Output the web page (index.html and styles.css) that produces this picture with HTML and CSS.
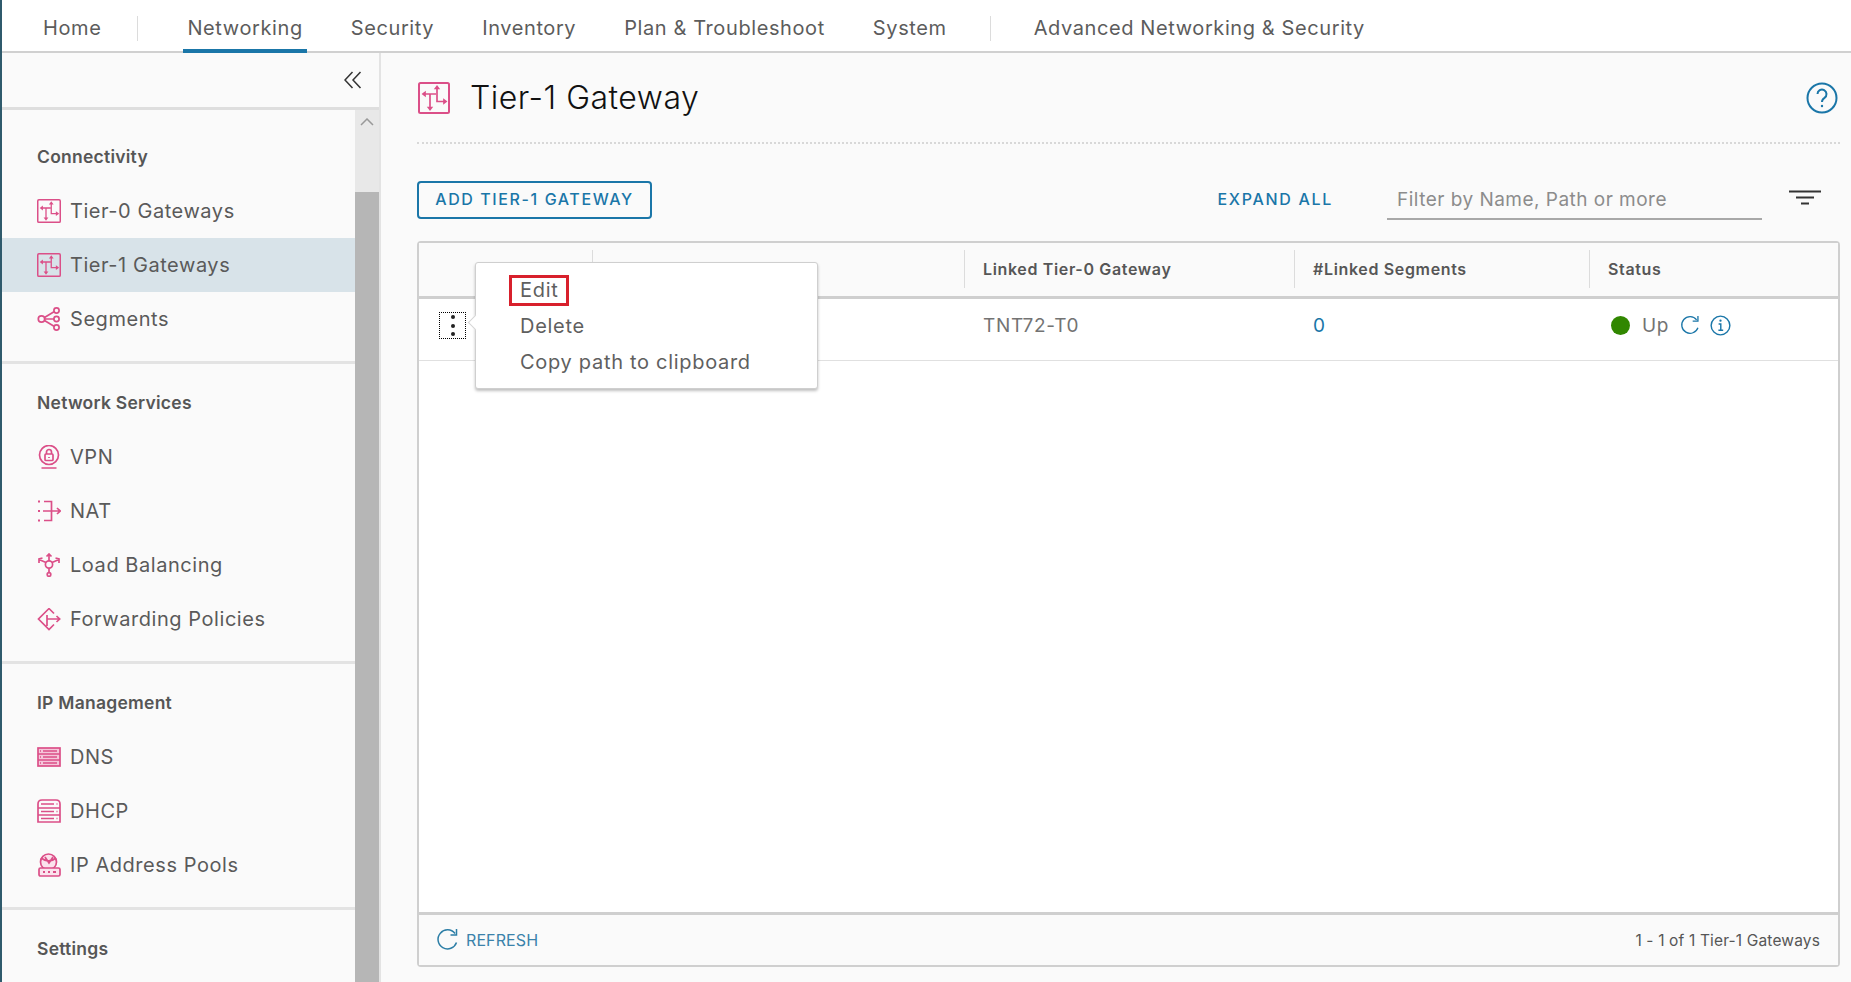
FILE: index.html
```html
<!DOCTYPE html>
<html lang="en">
<head>
    <meta charset="UTF-8">
    <title>Tier-1 Gateway</title>
    <link rel="stylesheet" href="styles.css">
</head>
<body>

<!-- Iconos -->
<svg class="sprite" width="0" height="0">
    <symbol id="i-gateway" viewBox="0 0 32 32">
        <rect x="1" y="1" width="30" height="30" rx="1.5" stroke-width="2"/>
        <path stroke-width="1.7" d="M5 12H18M12 12V27M19 5V19.5H27.5M5 12l2-1.5v3zM12 27.5l-1.5-2h3zM19 4.5l-1.5 2h3zM28 19.5l-2-1.5v3z"/>
    </symbol>
    <symbol id="i-segments" viewBox="0 0 24 24">
        <circle cx="4.5" cy="12" r="3.2"/><circle cx="19.5" cy="3.5" r="2.6"/><circle cx="19.5" cy="12" r="2.6"/><circle cx="19.5" cy="20.5" r="2.6"/>
        <path d="M7.5 10.5L17 4.8M7.8 12H17M7.5 13.5L17 19.2"/>
    </symbol>
    <symbol id="i-vpn" viewBox="0 0 24 24">
        <circle cx="12" cy="10" r="9.5"/>
        <rect x="8" y="9" width="8" height="6.5" rx="1"/>
        <path d="M9.5 9V7a2.5 2.5 0 0 1 5 0v2M4.500 23H19.500M12 12v1"/>
    </symbol>
    <symbol id="i-nat" viewBox="0 0 24 24">
        <path d="M7 2.5H14.5V21.5H7M6 12H23M20 9l3.2 3-3.2 3"/>
        <path d="M1 2.5H3M1 12H3M1 21.5H3" stroke-width="2"/>
    </symbol>
    <symbol id="i-lb" viewBox="0 0 24 24">
        <circle cx="12" cy="11.5" r="3.6"/><circle cx="12" cy="21.5" r="1.8"/>
        <path d="M12 8V1.5M9.5 3.5L12 1l2.5 2.5M12 15V19.7M9 9.5L2 6.5M2 10V6l3.5-1M15 9.5L22 6.5M22 10V6l-3.5-1"/>
    </symbol>
    <symbol id="i-forward" viewBox="0 0 24 24">
        <path d="M12 1.5L1.5 12 12 22.5 17 17.5M17 6.5L12 1.5M10 12H22.5M19.5 9l3.2 3-3.2 3M10 8V19"/>
    </symbol>
    <symbol id="i-dns" viewBox="0 0 24 20">
        <rect x="1" y="1" width="22" height="18" fill="#f5c6da"/>
        <path d="M1 7H23M1 13H23M6 4H20M6 10H20M6 16H20M3 4H4M3 10H4M3 16H4"/>
    </symbol>
    <symbol id="i-dhcp" viewBox="0 0 24 24">
        <path d="M1 23V5q0-4 4-4H19q4 0 4 4V23zM1 9H23M1 16H23M4 5H17M4 12.5H17M4 19.5H17M19.5 5H20.5M19.5 12.5H20.5M19.5 19.5H20.5"/>
    </symbol>
    <symbol id="i-pool" viewBox="0 0 24 24">
        <circle cx="11.5" cy="9" r="8" fill="#fbe3ed"/>
        <path d="M4 5q8 6 15 0M8 4l4 6 4-6"/>
        <rect x="2" y="15" width="21" height="8" rx="1.5" fill="#fbe3ed"/>
        <path d="M6 19H8M11 19H13M16 19H19" stroke-width="1.8"/>
    </symbol>
    <symbol id="i-refresh" viewBox="0 0 24 24">
        <path d="M20.5 14.5A9.5 9.5 0 1 1 19 5.5M20.5 1V7H14.5"/>
    </symbol>
</svg>

<div class="app">
    <header class="top-nav">
        <a class="nav-link nav-home">Home</a>
        <span class="nav-sep sep-a"></span>
        <a class="nav-link active">Networking</a>
        <a class="nav-link">Security</a>
        <a class="nav-link">Inventory</a>
        <a class="nav-link">Plan &amp; Troubleshoot</a>
        <a class="nav-link">System</a>
        <span class="nav-sep sep-b"></span>
        <a class="nav-link">Advanced Networking &amp; Security</a>
    </header>

    <div class="layout">
        <!-- Menu lateral -->
        <aside class="sidebar">
            <div class="collapse-bar">
                <svg class="collapse-icon" viewBox="0 0 18 18"><path d="M8.5 1L1 9l7.5 8M16.5 1L9 9l7.5 8"/></svg>
            </div>
            <div class="side-body">
                <nav class="side-menu">
                    <section class="side-group">
                        <h4>Connectivity</h4>
                        <a class="side-item"><svg class="side-icon"><use href="#i-gateway"/></svg>Tier-0 Gateways</a>
                        <a class="side-item selected"><svg class="side-icon"><use href="#i-gateway"/></svg>Tier-1 Gateways</a>
                        <a class="side-item"><svg class="side-icon"><use href="#i-segments"/></svg>Segments</a>
                    </section>
                    <section class="side-group">
                        <h4>Network Services</h4>
                        <a class="side-item"><svg class="side-icon"><use href="#i-vpn"/></svg>VPN</a>
                        <a class="side-item"><svg class="side-icon"><use href="#i-nat"/></svg>NAT</a>
                        <a class="side-item"><svg class="side-icon"><use href="#i-lb"/></svg>Load Balancing</a>
                        <a class="side-item"><svg class="side-icon"><use href="#i-forward"/></svg>Forwarding Policies</a>
                    </section>
                    <section class="side-group">
                        <h4>IP Management</h4>
                        <a class="side-item"><svg class="side-icon"><use href="#i-dns"/></svg>DNS</a>
                        <a class="side-item"><svg class="side-icon"><use href="#i-dhcp"/></svg>DHCP</a>
                        <a class="side-item"><svg class="side-icon"><use href="#i-pool"/></svg>IP Address Pools</a>
                    </section>
                    <section class="side-group">
                        <h4>Settings</h4>
                    </section>
                </nav>
                <div class="scrollbar">
                    <div class="scroll-track">
                        <svg class="scroll-up" viewBox="0 0 14 8"><path d="M1 7l6-6 6 6"/></svg>
                    </div>
                    <div class="scroll-thumb"></div>
                </div>
            </div>
        </aside>

        <!-- Contenido -->
        <main class="main">
            <div class="page-head">
                <svg class="page-icon"><use href="#i-gateway"/></svg>
                <h1>Tier-1 Gateway</h1>
                <svg class="help-icon" viewBox="0 0 32 32">
                    <circle cx="16" cy="16" r="14.5"/>
                    <path d="M11.5 12a4.5 4.5 0 1 1 7 3.8c-1.7 1-2.5 2-2.5 4.2"/>
                    <circle class="dot" cx="16" cy="24" r="1.2"/>
                </svg>
            </div>

            <div class="toolbar">
                <button class="btn-outline">ADD TIER-1 GATEWAY</button>
                <a class="expand-all">EXPAND ALL</a>
                <div class="filter-input">Filter by Name, Path or more</div>
                <svg class="filter-icon" viewBox="0 0 32 15"><path d="M0 1.5H32M7 7.5H25M12 13.5H20"/></svg>
            </div>

            <div class="grid-box">
                <div class="grid-head">
                    <div class="cell"></div>
                    <div class="cell"></div>
                    <div class="cell">Linked Tier-0 Gateway</div>
                    <div class="cell">#Linked Segments</div>
                    <div class="cell">Status</div>
                </div>
                <div class="grid-body">
                    <div class="grid-row">
                        <div class="cell"><span class="row-menu"><i></i><i></i><i></i></span></div>
                        <div class="cell"></div>
                        <div class="cell">TNT72-T0</div>
                        <div class="cell"><a class="link">0</a></div>
                        <div class="cell status">
                            <span class="status-dot"></span>
                            <span class="status-text">Up</span>
                            <svg class="mini-icon"><use href="#i-refresh"/></svg>
                            <svg class="mini-icon" viewBox="0 0 22 22">
                                <circle cx="11" cy="11" r="9.8"/>
                                <path d="M9 9.5H11.3V16M8.8 16H13.8"/>
                                <circle class="dot" cx="11" cy="6" r="1.2"/>
                            </svg>
                        </div>
                    </div>
                </div>
                <div class="grid-foot">
                    <a class="refresh"><svg class="refresh-icon"><use href="#i-refresh"/></svg>REFRESH</a>
                    <span class="count">1 - 1 of 1 Tier-1 Gateways</span>
                </div>

                <!-- Menu contextual -->
                <div class="popup">
                    <span class="popup-arrow"></span>
                    <a class="popup-item"><span class="marked">Edit</span></a>
                    <a class="popup-item">Delete</a>
                    <a class="popup-item">Copy path to clipboard</a>
                </div>
            </div>
        </main>
    </div>
</div>

</body>
</html>
```

FILE: styles.css
```css
html, body {
    height: 100%;
    margin: 0;
    overflow: hidden;
    background-color: #fafafa;
    font-family: 'Inter', 'Liberation Sans', sans-serif;
    color: #565656;
}

.sprite {
    position: absolute;
}

svg {
    fill: none;
    stroke: currentColor;
    stroke-width: 1.5;
}

a {
    cursor: pointer;
}

.app {
    height: 100%;
    display: flex;
    flex-direction: column;
    border-left: 2px solid #2f5a6c;
}

/* Barra superior */
.top-nav {
    height: 51px;
    flex: none;
    display: flex;
    align-items: stretch;
    padding-left: 41px;
    background-color: #fff;
    border-bottom: 2px solid #d0d0d0;
    font-size: 20px;
    letter-spacing: 0.6px;
}

.nav-link {
    display: flex;
    align-items: center;
    padding: 6px 4px 0;
    margin-right: 40px;
    margin-bottom: -2px;
    border-bottom: 4px solid transparent;
    color: #5c5c5c;
}

.nav-link.active {
    border-bottom-color: #1a76a8;
}

.nav-home {
    margin-right: 0;
    padding: 6px 0 0;
}

.nav-sep {
    width: 1px;
    height: 25px;
    margin-top: 16px;
    background-color: #dcdcdc;
}

.sep-a {
    margin-left: 36px;
    margin-right: 45px;
}

.sep-b {
    margin-left: -1px;
    margin-right: 39px;
}

.layout {
    flex: 1;
    min-height: 0;
    display: flex;
}

/* Menu lateral */
.sidebar {
    width: 379px;
    flex: none;
    box-sizing: border-box;
    display: flex;
    flex-direction: column;
    border-right: 2px solid #e3e3e3;
}

.collapse-bar {
    height: 57px;
    flex: none;
    box-sizing: border-box;
    display: flex;
    align-items: center;
    justify-content: flex-end;
    padding-right: 17px;
    border-bottom: 3px solid #dedede;
}

.collapse-icon {
    width: 18px;
    height: 18px;
    color: #333;
}

.side-body {
    flex: 1;
    min-height: 0;
    display: flex;
}

.side-menu {
    flex: 1;
    min-width: 0;
}

.side-group {
    padding: 26px 0 15px;
    border-bottom: 3px solid #e3e3e3;
}

.side-group:first-child {
    padding-top: 34px;
}

.side-group:last-child {
    border-bottom: none;
}

.side-group h4 {
    margin: 0 0 14px 35px;
    line-height: 26px;
    font-size: 17.5px;
    font-weight: 600;
    letter-spacing: 0.25px;
    color: #565656;
}

.side-item {
    height: 54px;
    display: flex;
    align-items: center;
    gap: 9px;
    padding-left: 35px;
    font-size: 20px;
    letter-spacing: 0.55px;
    color: #5a5a5a;
}

.side-item.selected {
    background-color: #d8e3e9;
}

.side-icon {
    width: 24px;
    height: 24px;
    color: #db4f88;
    stroke-width: 1.7;
}

.scrollbar {
    width: 24px;
    flex: none;
    display: flex;
    flex-direction: column;
}

.scroll-track {
    height: 82px;
    flex: none;
    background-color: #e8e8e8;
}

.scroll-up {
    display: block;
    width: 14px;
    height: 8px;
    margin: 8px auto 0;
    color: #999;
}

.scroll-thumb {
    flex: 1;
    background-color: #b6b6b6;
}

/* Contenido */
.main {
    flex: 1;
    min-width: 0;
    padding: 0 11px 0 36px;
}

.page-head {
    height: 91px;
    box-sizing: border-box;
    display: flex;
    align-items: center;
    border-bottom: 2px dotted #d8d8d8;
}

.page-icon {
    width: 32px;
    height: 32px;
    margin-left: 1px;
    color: #db4f88;
}

.page-head h1 {
    flex: 1;
    margin: 0 0 0 20px;
    font-size: 32px;
    font-weight: 300;
    letter-spacing: 0.5px;
    color: #111;
}

.help-icon {
    width: 32px;
    height: 32px;
    margin-right: 2px;
    color: #1a76a8;
    stroke-width: 2;
}

.dot {
    fill: currentColor;
    stroke: none;
}

.toolbar {
    display: flex;
    align-items: center;
    height: 38px;
    margin-top: 37px;
}

.btn-outline {
    width: 235px;
    height: 38px;
    padding: 0 0 2px;
    border: 2px solid #1a76a8;
    border-radius: 4px;
    background: transparent;
    font-family: inherit;
    font-size: 16px;
    font-weight: 500;
    letter-spacing: 1.6px;
    color: #1a76a8;
}

.expand-all {
    margin-left: auto;
    margin-bottom: 3px;
    font-size: 16px;
    font-weight: 500;
    letter-spacing: 1.7px;
    color: #1a76a8;
}

.filter-input {
    width: 365px;
    height: 36px;
    margin-left: 54px;
    padding: 2px 0 0 10px;
    line-height: 35px;
    font-size: 19px;
    letter-spacing: 0.48px;
    color: #8c8c8c;
    border-bottom: 2px solid #a8a8a8;
}

.filter-icon {
    width: 32px;
    height: 15px;
    margin: 0 19px 6px 27px;
    color: #333;
    stroke-width: 2;
}

/* Tabla */
.grid-box {
    position: relative;
    height: 726px;
    margin-top: 22px;
    box-sizing: border-box;
    display: flex;
    flex-direction: column;
    border: 2px solid #cfcfcf;
    border-radius: 4px;
    background-color: #fff;
}

.grid-head,
.grid-row {
    display: grid;
    grid-template-columns: 174px 372px 330px 295px 1fr;
}

.grid-head {
    height: 56px;
    flex: none;
    align-items: center;
    box-sizing: border-box;
    padding-bottom: 2px;
    border-bottom: 3px solid #cfcfcf;
    background-color: #fafafa;
    font-size: 16px;
    font-weight: 600;
    letter-spacing: 0.65px;
    color: #565656;
}

.grid-head .cell {
    height: 38px;
    display: flex;
    align-items: center;
    box-sizing: border-box;
    padding-left: 18px;
    border-right: 1px solid #dcdcdc;
}

.grid-head .cell:last-child {
    border-right: none;
}

.grid-body {
    flex: 1;
    min-height: 0;
}

.grid-row {
    height: 62px;
    box-sizing: border-box;
    align-items: center;
    padding-bottom: 8px;
    border-bottom: 1px solid #e0e0e0;
    font-size: 19px;
    letter-spacing: 0.7px;
    color: #737373;
}

.grid-row .cell {
    padding-left: 18px;
}

.grid-row .cell:first-child {
    padding-left: 20px;
}

.row-menu {
    width: 27px;
    height: 27px;
    display: flex;
    flex-direction: column;
    align-items: center;
    justify-content: space-between;
    border: 1px dotted #000;
    box-sizing: border-box;
}

.row-menu i {
    width: 4px;
    height: 4px;
    margin: 2px 0;
    border-radius: 50%;
    background-color: #222;
}

.link {
    color: #1a76a8;
}

.grid-row .status {
    display: flex;
    align-items: center;
    padding-left: 21px;
}

.status-dot {
    width: 19px;
    height: 19px;
    flex: none;
    border-radius: 50%;
    background-color: #318700;
}

.status-text {
    margin: 0 11px 0 12px;
}

.mini-icon {
    width: 21px;
    height: 21px;
    flex: none;
    margin-right: 9px;
    color: #1a76a8;
}

.grid-foot {
    height: 53px;
    flex: none;
    box-sizing: border-box;
    display: flex;
    align-items: center;
    justify-content: space-between;
    padding: 0 18px 0 17px;
    border-top: 3px solid #cfcfcf;
    background-color: #fafafa;
}

.refresh {
    display: flex;
    align-items: center;
    gap: 6px;
    font-size: 16px;
    letter-spacing: 0.1px;
    color: #3b82aa;
}

.refresh-icon {
    width: 24px;
    height: 24px;
    color: #2c7ea6;
}

.count {
    font-size: 15.5px;
    letter-spacing: 0.15px;
    color: #565656;
}

/* Menu contextual */
.popup {
    position: absolute;
    left: 56px;
    top: 19px;
    width: 343px;
    height: 127px;
    box-sizing: border-box;
    padding-top: 9px;
    background-color: #fff;
    border: 1px solid #cfcfcf;
    border-radius: 3px;
    box-shadow: 0 2px 3px rgba(0, 0, 0, 0.25);
}

.popup-arrow {
    position: absolute;
    left: -6px;
    top: 54px;
    width: 10px;
    height: 10px;
    background-color: #fff;
    border-left: 1px solid #d5d5d5;
    border-bottom: 1px solid #d5d5d5;
    transform: rotate(45deg);
}

.popup-item {
    display: block;
    height: 36px;
    line-height: 36px;
    padding-left: 44px;
    font-size: 20px;
    letter-spacing: 0.7px;
    color: #5f5f5f;
}

.marked {
    display: inline-block;
    line-height: 25px;
    padding: 0 8px;
    margin-left: -11px;
    border: 3px solid #d8202c;
}
```
